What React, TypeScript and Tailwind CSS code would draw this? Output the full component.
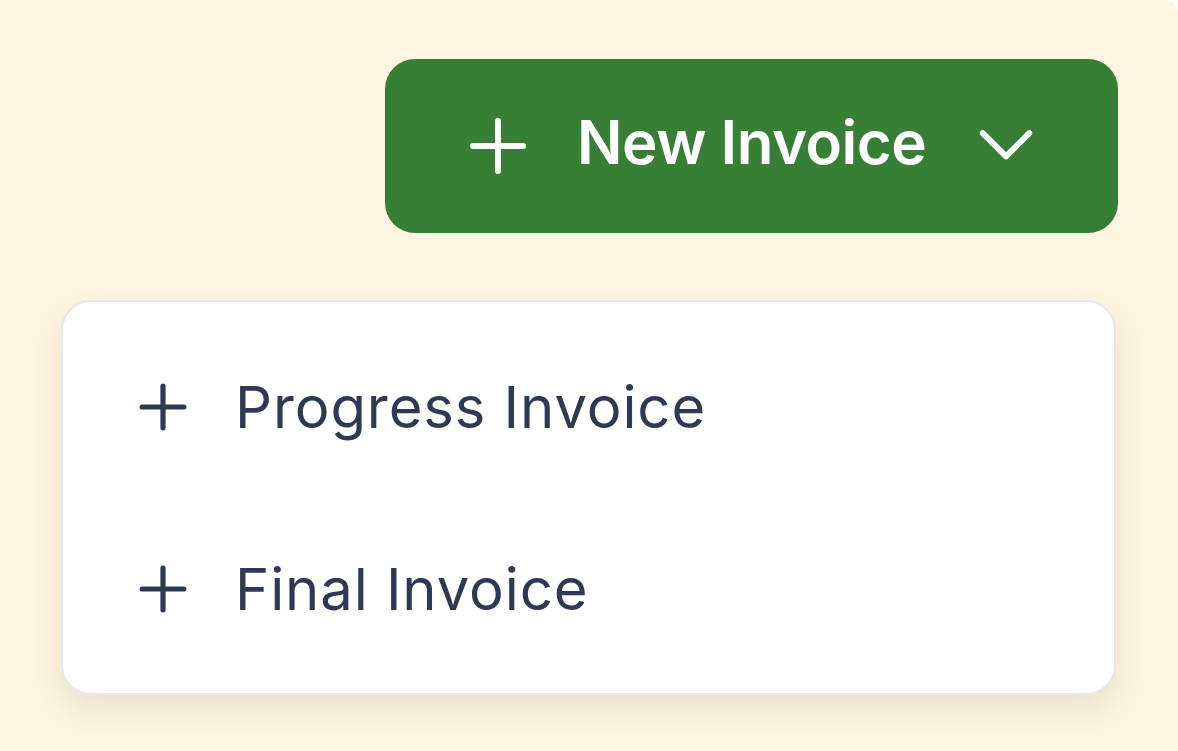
import React from 'react'

function PlusIcon({ className, stroke = 2 }: { className?: string; stroke?: number }) {
    return (
        <svg viewBox="0 0 24 24" fill="none" stroke="currentColor" strokeWidth={stroke} strokeLinecap="round" className={className}>
            <path d="M12 2v20M2 12h20" />
        </svg>
    )
}

function ChevronIcon({ className }: { className?: string }) {
    return (
        <svg viewBox="0 0 24 24" fill="none" stroke="currentColor" strokeWidth={2.3} strokeLinecap="round" strokeLinejoin="round" className={className}>
            <path d="M3 7l9 9 9-9" />
        </svg>
    )
}

export default function App() {
    return (
        <div className="w-[1178px] h-[751px] bg-white font-['Inter',sans-serif]">
            <div className="w-full h-full bg-[#fdf5e1] rounded-tr-[14px] flex flex-col items-end pt-[59px] pr-[60px]">
                {/* New Invoice button */}
                <button className="w-[733px] h-[174px] bg-[#367f35] rounded-[30px] flex items-center pl-[83px] text-white">
                    <PlusIcon className="w-[60px] h-[60px]" stroke={2.4} />
                    <span className="ml-[49px] mb-[8px] text-[60px] font-semibold tracking-[-0.5px] leading-none">New Invoice</span>
                    <ChevronIcon className="ml-[49px] w-[62px] h-[62px]" />
                </button>

                {/* Dropdown menu */}
                <div className="mt-[67px] w-[1055px] h-[395px] mr-[2px] bg-white border-2 border-[#e6e8ec] rounded-[30px] shadow-[0_14px_28px_rgba(120,100,60,0.14)] flex flex-col pt-[78px] pl-[75px] text-[#2e3a51]">
                    <div className="flex items-center h-[54px]">
                        <PlusIcon className="w-[50px] h-[50px]" stroke={2.5} />
                        <span className="ml-[47px] text-[58px] font-normal tracking-[0.9px] leading-none">Progress Invoice</span>
                    </div>
                    <div className="flex items-center h-[54px] mt-[128px]">
                        <PlusIcon className="w-[50px] h-[50px]" stroke={2.5} />
                        <span className="ml-[47px] text-[58px] font-normal tracking-[0.9px] leading-none">Final Invoice</span>
                    </div>
                </div>
            </div>
        </div>
    )
}
